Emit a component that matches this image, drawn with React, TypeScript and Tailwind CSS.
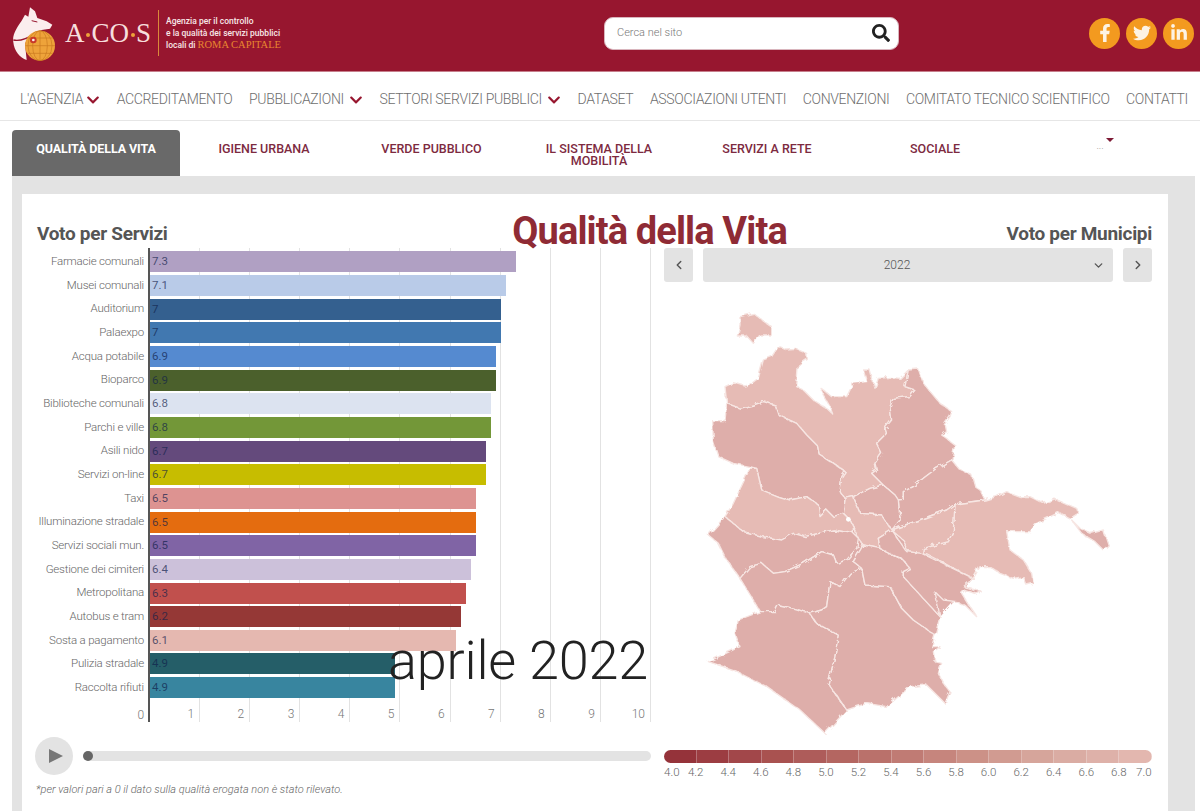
import { ChevronDown, ChevronLeft, ChevronRight } from "lucide-react";
import { FaFacebookF, FaTwitter, FaLinkedinIn, FaChevronDown, FaSearch } from "react-icons/fa";

const bars: [string, string, string, number][] = [
  ["Farmacie comunali", "7.3", "#b0a0c3", 7.3],
  ["Musei comunali", "7.1", "#b9cbe8", 7.1],
  ["Auditorium", "7", "#34608f", 7],
  ["Palaexpo", "7", "#4178b0", 7],
  ["Acqua potabile", "6.9", "#558ad0", 6.9],
  ["Bioparco", "6.9", "#4b602c", 6.9],
  ["Biblioteche comunali", "6.8", "#dce3f0", 6.8],
  ["Parchi e ville", "6.8", "#739738", 6.8],
  ["Asili nido", "6.7", "#644a7c", 6.7],
  ["Servizi on-line", "6.7", "#c7bd00", 6.7],
  ["Taxi", "6.5", "#dd9391", 6.5],
  ["Illuminazione stradale", "6.5", "#e46c0f", 6.5],
  ["Servizi sociali mun.", "6.5", "#8064a5", 6.5],
  ["Gestione dei cimiteri", "6.4", "#ccc1da", 6.4],
  ["Metropolitana", "6.3", "#c1504d", 6.3],
  ["Autobus e tram", "6.2", "#953836", 6.2],
  ["Sosta a pagamento", "6.1", "#e5b8b0", 6.1],
  ["Pulizia stradale", "4.9", "#255e68", 4.9],
  ["Raccolta rifiuti", "4.9", "#38859f", 4.9],
];

const nav: [string, boolean][] = [
  ["L'AGENZIA", true],
  ["ACCREDITAMENTO", false],
  ["PUBBLICAZIONI", true],
  ["SETTORI SERVIZI PUBBLICI", true],
  ["DATASET", false],
  ["ASSOCIAZIONI UTENTI", false],
  ["CONVENZIONI", false],
  ["COMITATO TECNICO SCIENTIFICO", false],
  ["CONTATTI", false],
];

const legendColors = [
  "#95333a", "#9c3d42", "#a2474a", "#a95250", "#ae5c5a", "#b46661", "#ba716b", "#c07b74",
  "#c6857d", "#cc9187", "#d19b91", "#d6a59b", "#daaca3", "#deb1a9", "#e3b7af",
];
const legendLabels = ["4.2", "4.4", "4.6", "4.8", "5.0", "5.2", "5.4", "5.6", "5.8", "6.0", "6.2", "6.4", "6.6", "6.8"];

const L = "#e6bbb5";
const D = "#deaeaa";
const Y = (pts: number[][]) => pts.map((p) => p.join(",")).join(" ");
const z5 = (pts: number[][]) => pts.map(([x, y]) => [x, y + 630]);

const regions: [string, number[][]][] = [
  [L, [[150, 50], [190, 40], [215, 60], [245, 80], [245, 105], [210, 105], [190, 130], [170, 108], [142, 108], [150, 75]]],
  [L, [[105, 260], [130, 248], [165, 258], [185, 250], [205, 235], [220, 180], [245, 170], [265, 140], [290, 150], [320, 148], [350, 160], [352, 178], [325, 195], [320, 260], [340, 270], [370, 300], [410, 325], [428, 342], [420, 320], [400, 285], [390, 262], [425, 290], [470, 290], [490, 250], [530, 245], [520, 210], [540, 210], [555, 265], [565, 235], [600, 232], [630, 235], [655, 210], [645, 260], [675, 270], [660, 290], [610, 295], [600, 320], [605, 360], [585, 385], [590, 400], [560, 430], [575, 460], [555, 490], [560, 510], [545, 520], [580, 555], [540, 565], [490, 590], [465, 595], [450, 575], [455, 530], [465, 515], [430, 490], [390, 465], [385, 440], [350, 405], [320, 370], [265, 345], [255, 315], [220, 305], [190, 315], [150, 325], [110, 310]]],
  [D, [[655, 210], [685, 207], [700, 250], [725, 280], [750, 310], [785, 335], [780, 350], [765, 370], [770, 395], [755, 405], [795, 435], [785, 480], [740, 505], [700, 535], [670, 560], [640, 575], [640, 598], [625, 600], [615, 585], [580, 555], [545, 520], [560, 510], [555, 490], [575, 460], [560, 430], [590, 400], [585, 385], [605, 360], [600, 320], [610, 295], [660, 290], [675, 270], [645, 260]]],
  [D, [[785, 480], [810, 510], [845, 525], [855, 560], [870, 570], [885, 600], [795, 612], [770, 630], [605, 690], [630, 660], [625, 600], [640, 598], [640, 575], [670, 560], [700, 535], [740, 505]]],
  [L, [[885, 600], [920, 590], [950, 575], [990, 590], [1020, 590], [1060, 610], [1095, 597], [1160, 625], [1165, 640], [1140, 655], [1105, 638], [1040, 670], [1020, 695], [950, 695], [960, 750], [1000, 780], [1025, 820], [1030, 850], [1010, 855], [1000, 830], [970, 835], [930, 820], [900, 800], [870, 800], [850, 835], [715, 765], [697, 762], [700, 745], [775, 725], [790, 690], [795, 612]]],
  [D, [[1145, 660], [1170, 685], [1205, 700], [1240, 690], [1255, 735], [1240, 750], [1215, 725], [1175, 700]]],
  [L, [[795, 612], [790, 690], [775, 725], [700, 745], [697, 762], [655, 755], [640, 720], [605, 690], [770, 630]]],
  [D, [[490, 590], [540, 565], [580, 555], [615, 585], [625, 600], [630, 660], [605, 690], [575, 645], [510, 640]]],
  [L, [[465, 595], [490, 590], [510, 640], [575, 645], [605, 690], [565, 715], [570, 745], [520, 735], [505, 715], [490, 680], [480, 660], [460, 640]]],
  [D, [[110, 310], [150, 325], [190, 315], [220, 305], [255, 315], [265, 345], [320, 370], [350, 405], [385, 440], [390, 465], [430, 490], [465, 515], [455, 530], [450, 575], [465, 595], [460, 640], [430, 650], [410, 630], [390, 650], [385, 615], [350, 590], [300, 600], [265, 590], [215, 570], [200, 505], [180, 500], [130, 490], [85, 470], [70, 425], [68, 362], [105, 362]]],
  [L, [[180, 505], [200, 505], [215, 570], [265, 590], [300, 600], [350, 590], [385, 615], [390, 650], [410, 630], [430, 650], [460, 640], [480, 660], [490, 680], [490, 700], [430, 690], [345, 710], [310, 700], [275, 720], [215, 710], [160, 695], [105, 650], [130, 610]]],
  [D, z5([[105, 20], [160, 65], [215, 80], [275, 90], [310, 70], [345, 80], [430, 60], [490, 70], [505, 85], [500, 115], [470, 150], [440, 160], [430, 135], [395, 125], [340, 160], [285, 185], [250, 190], [215, 160], [180, 170], [150, 205], [110, 150], [85, 100], [55, 75]])],
  [D, z5([[150, 205], [180, 170], [215, 160], [250, 190], [285, 185], [340, 160], [395, 125], [430, 135], [440, 160], [470, 150], [500, 115], [520, 105], [490, 155], [515, 175], [480, 190], [450, 230], [420, 215], [410, 290], [395, 300], [360, 310], [310, 295], [265, 285], [255, 305], [210, 305], [190, 270]])],
  [D, z5([[55, 455], [150, 410], [135, 370], [145, 330], [210, 305], [255, 305], [265, 285], [310, 295], [360, 310], [380, 340], [445, 375], [435, 440], [415, 520], [470, 600], [405, 670], [330, 600], [230, 530], [130, 480]])],
  [D, z5([[360, 310], [395, 300], [410, 290], [420, 215], [450, 230], [480, 190], [515, 175], [525, 225], [600, 230], [635, 295], [670, 330], [735, 375], [725, 410], [750, 410], [730, 425], [735, 455], [755, 460], [745, 490], [760, 520], [780, 545], [765, 580], [710, 525], [660, 530], [590, 590], [530, 580], [470, 600], [415, 520], [435, 440], [445, 375], [380, 340]])],
  [D, z5([[520, 105], [570, 115], [640, 150], [660, 175], [640, 185], [640, 200], [750, 320], [735, 375], [670, 330], [635, 295], [600, 230], [525, 225], [515, 175], [490, 155]])],
  [D, z5([[565, 85], [605, 60], [650, 125], [695, 130], [850, 205], [820, 230], [875, 245], [860, 252], [825, 240], [815, 250], [840, 290], [860, 320], [830, 290], [800, 275], [760, 270], [735, 245], [750, 320], [640, 200], [640, 185], [660, 175], [640, 150], [570, 115]])],
];

function Logo() {
  return (
    <svg viewBox="36 16 135 165" className="w-[45px] h-[55px] shrink-0">
      <path d="M90 20L105 32L112 52L140 62L157 72L150 84L125 88L105 100L85 108L75 130L80 178C60 172 42 150 40 125C35 100 55 75 65 60L75 42L85 48Z" fill="#fbeeee" />
      <path d="M95 60L112 64" stroke="#97162f" strokeWidth="3" fill="none" />
      <path d="M40 118C60 122 85 112 105 98" stroke="#97162f" strokeWidth="4" fill="none" />
      <circle cx="120" cy="135" r="45" fill="#eea33a" />
      <g stroke="#c9781f" strokeWidth="2" fill="none">
        <ellipse cx="120" cy="135" rx="22" ry="45" />
        <ellipse cx="120" cy="135" rx="36" ry="45" />
        <path d="M120 90V180M76 135H165M82 112H158M82 158H158" />
      </g>
      <circle cx="100" cy="118" r="10" fill="#c8382a" />
      <circle cx="100" cy="118" r="4" fill="#fbeeee" />
    </svg>
  );
}

function Dot() {
  return <span className="inline-block w-[4px] h-[4px] mx-[1.5px] rounded-full bg-[#eea33a] align-middle" />;
}

export default function App() {
  return (
    <div className="w-[1200px] h-[811px] overflow-hidden bg-white font-['Roboto',sans-serif]">
      <header className="h-[72px] bg-[#97162f] border-b border-[#c77f8c] flex items-center pl-3 pb-[5px]">
        <Logo />
        <div className="ml-2 font-['Liberation_Serif',serif] text-[27px] leading-none text-[#f6dedd] w-[85px] whitespace-nowrap">
          A<Dot />CO<Dot />S
        </div>
        <div className="ml-2 w-px h-[46px] bg-[#d98a3a]" />
        <div className="ml-[7px] w-[125px] text-[8.5px] leading-[12px] font-medium text-[#f7e7e7] whitespace-nowrap">
          <div>Agenzia per il controllo</div>
          <div>e la qualità dei servizi pubblici</div>
          <div>
            locali di <span className="font-['Liberation_Serif',serif] font-normal text-[#e8862f] text-[10.5px]">ROMA CAPITALE</span>
          </div>
        </div>
        <div className="ml-[313px] w-[295px] h-[33px] bg-white rounded-[9px] flex items-center justify-between pl-3 pr-2 border border-[#d9b5bd]">
          <span className="text-[11px] font-light text-[#777]">Cerca nel sito</span>
          <FaSearch className="w-[18px] h-[18px] text-[#222]" />
        </div>
        <div className="ml-[190px] flex gap-[6px]">
          {[FaFacebookF, FaTwitter, FaLinkedinIn].map((I, i) => (
            <span key={i} className="w-[31px] h-[31px] rounded-full bg-[#f39a1f] flex items-center justify-center text-[#fdf3e4]">
              <I className="w-[18px] h-[18px]" />
            </span>
          ))}
        </div>
      </header>

      <nav className="h-[49px] border-b border-[#e6e6e6] flex items-center pl-5 pt-[7px] gap-[16.5px] text-[14px] font-light text-[#6e6e6e] tracking-[-0.33px] whitespace-nowrap">
        {nav.map(([t, c], i) => (
          <span key={t} className={i === 0 ? "flex items-center gap-[3px]" : "flex items-center gap-[5px]"}>
            {t}
            {c && <FaChevronDown className="w-[14px] h-[14px] text-[#97162f]" />}
          </span>
        ))}
      </nav>

      <div className="pt-[9px] pl-3 grid grid-cols-[168px_168px_167px_168px_168px_168px_168px] h-[55px]">
        <div className="bg-[#696969] rounded-t-[4px] text-center text-white text-[12.5px] leading-[12px] font-bold pt-[13px] tracking-[-0.1px]">
          QUALITÀ DELLA VITA
        </div>
        {["IGIENE URBANA", "VERDE PUBBLICO", "IL SISTEMA DELLA MOBILITÀ", "SERVIZI A RETE", "SOCIALE"].map((t) => (
          <div key={t} className="text-center text-[#7d2a3f] text-[12.5px] leading-[12px] font-medium px-[30px] pt-[13px]">
            {t}
          </div>
        ))}
        <div className="flex justify-center pl-[4px] pt-[8px] text-[9px] text-[#999] leading-none gap-[2px]">
          <span className="pt-[4px]">...</span>
          <span className="w-0 h-0 border-x-[4px] border-x-transparent border-t-[4px] border-t-[#7d1a35]" />
        </div>
      </div>

      <main className="ml-3 mr-[5px] h-[635px] bg-[#e3e3e3] pt-[18px] pl-[10px] pr-[27px]">
        <div className="relative h-full bg-white pl-[15px] pr-[16px]">
          <div className="h-[54px] flex items-end justify-between">
            <h2 className="text-[19px] font-bold text-[#555] leading-[28px] tracking-[-0.3px]">Voto per Servizi</h2>
            <h1 className="text-[38px] font-bold text-[#8f2b35] leading-[42px] tracking-[-0.88px] mb-[-4px] ml-[125px]">Qualità della Vita</h1>
            <h2 className="text-[19px] font-bold text-[#555] leading-[28px] tracking-[-0.3px]">Voto per Municipi</h2>
          </div>

          <div className="flex gap-[13px]">
            <section className="w-[614px] relative">
              <div className="flex gap-[4px] h-[474px]">
                <div className="w-[107px] pt-[2px] text-right text-[11.5px] font-light text-[#666] tracking-[-0.2px] whitespace-nowrap flex flex-col items-end">
                  {bars.map((b) => (
                    <div key={b[0]} className="h-[23.67px] leading-[23.67px]">{b[0]}</div>
                  ))}
                  <div className="mt-[6px] leading-[20px] text-[12px] text-[#777]">0</div>
                </div>
                <div className="relative w-[503px] border-l-2 border-[#555] pt-[2px]">
                  <div className="absolute inset-0 flex">
                    {Array.from({ length: 10 }, (_, i) => (
                      <div key={i} className="w-[50.1px] border-r border-[#e2e2e2] flex items-end justify-end pr-[5px] text-[12px] font-light text-[#777]">
                        <span className="leading-[20px] mb-[-2px]">{i + 1}</span>
                      </div>
                    ))}
                  </div>
                  <div className="relative flex flex-col">
                    {bars.map((b) => (
                      <div key={b[0]} className="h-[23.67px] flex items-center">
                        <div
                          className="h-[21px] pl-[2px] text-[11.5px] leading-[21px] text-[#10204a]/70"
                          style={{ width: `${b[3] * 50.1}px`, backgroundColor: b[2] }}
                        >
                          {b[1]}
                        </div>
                      </div>
                    ))}
                  </div>
                </div>
              </div>
              <div className="mt-[15px] ml-[-2px] flex items-center">
                <div className="w-[38px] h-[38px] rounded-full bg-[#e3e3e3] flex items-center justify-center">
                  <span className="ml-[3px] w-0 h-0 border-y-[7px] border-y-transparent border-l-[14px] border-l-[#777]" />
                </div>
                <div className="ml-[11px] flex-1 h-[10px] rounded-full bg-[#e3e3e3] flex items-center">
                  <span className="w-[10px] h-[10px] rounded-full bg-[#666] ml-[-1px]" />
                </div>
              </div>
              <p className="mt-[7px] ml-[-1px] text-[11px] italic font-light text-[#666]">
                *per valori pari a 0 il dato sulla qualità erogata non è stato rilevato.
              </p>
              <div className="absolute left-[351px] top-[383px] text-[54px] leading-[60px] font-light text-[#222] whitespace-nowrap tracking-[-0.2px]">
                aprile 2022
              </div>
            </section>

            <section className="w-[488px]">
              <div className="flex gap-[10px] h-[34px] text-[#555]">
                <div className="w-[29px] bg-[#e3e3e3] rounded-[3px] flex items-center justify-center">
                  <ChevronLeft className="w-[14px] h-[14px]" strokeWidth={2.5} />
                </div>
                <div className="flex-1 bg-[#e3e3e3] rounded-[3px] flex items-center justify-center relative pr-[22px] text-[12px] font-light text-[#555]">
                  2022
                  <ChevronDown className="absolute right-[8px] w-[13px] h-[13px]" strokeWidth={2.5} />
                </div>
                <div className="w-[29px] bg-[#e3e3e3] rounded-[3px] flex items-center justify-center">
                  <ChevronRight className="w-[14px] h-[14px]" strokeWidth={2.5} />
                </div>
              </div>
              <svg viewBox="0 0 1290 1320" className="mt-[18px] ml-[26px] w-[430px] h-[440px]">
                <defs>
                  <filter id="rough" x="-5%" y="-5%" width="110%" height="110%">
                    <feTurbulence type="fractalNoise" baseFrequency="0.045" numOctaves="3" seed="4" />
                    <feDisplacementMap in="SourceGraphic" scale="16" />
                  </filter>
                </defs>
                <g filter="url(#rough)">
                  <polygon points="450,575 640,590 640,700 850,835 745,950 500,820 450,700" fill={D} />
                  {regions.map(([c, p], i) => (
                    <polygon key={i} points={Y(p)} fill={c} stroke="#f7e6e3" strokeWidth={4} strokeLinejoin="round" />
                  ))}
                </g>
                <circle cx="475" cy="658" r="7" fill="#ffffff" />
              </svg>
              <div className="mt-[10px] flex h-[13px] rounded-full overflow-hidden">
                {legendColors.map((c) => (
                  <div key={c} className="flex-1 border-r border-white/30" style={{ backgroundColor: c }} />
                ))}
              </div>
              <div className="mt-[1px] flex text-[11.5px] font-light text-[#666] leading-[16px]">
                <span className="w-[16px]">4.0</span>
                <span className="w-[8px]" />
                {legendLabels.map((l, i) => (
                  <span key={l} className={i === 0 ? "w-[16px]" : "w-[16px] ml-[16.6px]"}>{l}</span>
                ))}
                <span className="ml-[9px] w-[16px]">7.0</span>
              </div>
            </section>
          </div>
        </div>
      </main>
    </div>
  );
}
